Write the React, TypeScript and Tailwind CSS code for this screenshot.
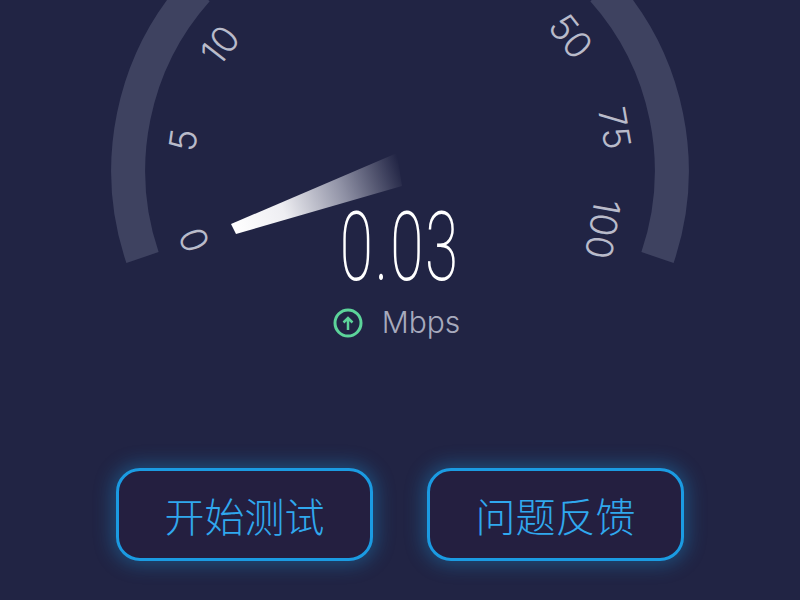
const ticks = [
  { label: "0", x: 194, y: 240, r: -112 },
  { label: "5", x: 183, y: 140, r: -82 },
  { label: "10", x: 220, y: 45, r: -52 },
  { label: "50", x: 571, y: 36, r: 52 },
  { label: "75", x: 615, y: 128, r: 80 },
  { label: "100", x: 603, y: 229, r: 100 },
];

function Gauge() {
  return (
    <svg className="absolute inset-0" width="800" height="440" viewBox="0 0 800 440">
      <defs>
        <linearGradient id="needle" gradientUnits="userSpaceOnUse" x1="233" y1="229" x2="402" y2="170">
          <stop offset="0" stopColor="#ffffff" />
          <stop offset="0.3" stopColor="#eeeef2" />
          <stop offset="0.65" stopColor="#8f91a5" />
          <stop offset="1" stopColor="#8f91a5" stopOpacity="0" />
        </linearGradient>
      </defs>
      <path d="M142.5 257.5 A271.5 271.5 0 0 1 197 -10 M603 -10 A271.5 271.5 0 0 1 657.5 257.5" fill="none" stroke="#3e4260" strokeWidth="34" />
      <polygon points="231,224 397,153 402,186 236,234" fill="url(#needle)" />
      {ticks.map((t) => (
        <text
          key={t.label}
          x={t.x}
          y={t.y}
          fill="#b9bbca"
          fontSize="37"
          fontWeight="300"
          fontFamily="Inter, sans-serif"
          textAnchor="middle"
          dominantBaseline="central"
          transform={`rotate(${t.r} ${t.x} ${t.y})`}
        >
          {t.label}
        </text>
      ))}
    </svg>
  );
}

function GlowButton({ label }: { label: string }) {
  return (
    <button className="w-[257px] h-[93px] rounded-[24px] border-[3px] border-[#1b9be2] bg-[#241f40] shadow-[0_0_18px_4px_rgba(27,151,220,0.35)] text-[#30a8ee] text-[40px] font-light font-['Noto_Sans_CJK_SC',sans-serif]">
      {label}
    </button>
  );
}

export default function App() {
  return (
    <div className="w-[800px] h-[600px] overflow-hidden bg-[#212444] flex flex-col">
      <div className="relative h-[468px]">
        <Gauge />
        <div className="relative flex flex-col items-center pt-[197px]">
          <div className="h-[100px] flex items-center text-[97px] leading-none tracking-[3px] text-white font-extralight font-['Roboto',sans-serif] scale-x-[0.62]">
            0.03
          </div>
          <div className="flex items-center gap-[19px] mt-[8px] ml-[-7px]">
            <svg className="mt-[3px]" width="30" height="30" viewBox="0 0 30 30" fill="none">
              <circle cx="15" cy="15" r="13" stroke="#5cd49a" strokeWidth="3" />
              <path d="M15 22V10M10.5 14.5l4.5-4.5 4.5 4.5" stroke="#5cd49a" strokeWidth="2.5" />
            </svg>
            <span className="text-[30px] leading-none text-[#a7aabd] font-['Inter',sans-serif] font-light">Mbps</span>
          </div>
        </div>
      </div>
      <div className="flex justify-center gap-[54px]">
        <GlowButton label="开始测试" />
        <GlowButton label="问题反馈" />
      </div>
    </div>
  );
}
